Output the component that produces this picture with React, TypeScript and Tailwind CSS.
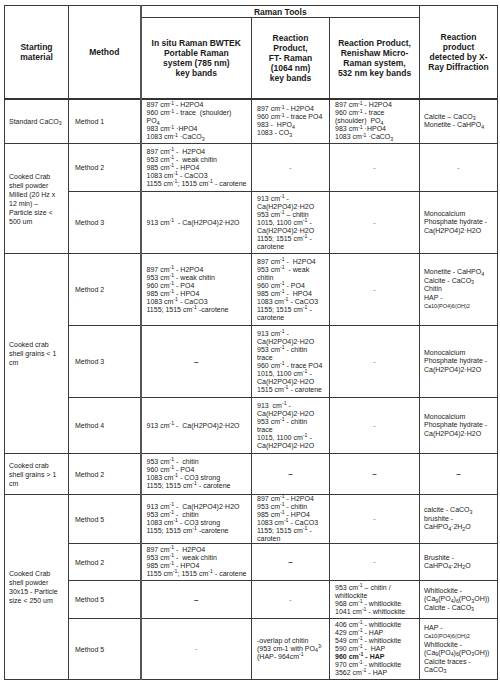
import React from "react";

const Cm = () => (
  <>
    cm<sup>-1</sup>
  </>
);

function Lines({ items, className = "" }: { items: React.ReactNode[]; className?: string }) {
  return (
    <div className={className}>
      {items.map((item, i) => (
        <div key={i} className="whitespace-nowrap">
          {item}
        </div>
      ))}
    </div>
  );
}

const th = "border border-[#3a3a3a] font-bold text-[8.5px] leading-[10px] text-center align-middle text-[#1a1a1a]";
const td = "border border-[#3a3a3a] align-middle px-[5px] py-0 text-[7px] leading-[8px] text-[#222]";
const tdSplit = `${td} border-l-2 border-l-[#555]`;
const first = "border border-[#3a3a3a] align-middle pl-[4px] pr-[2px] text-[7px] leading-[9px] text-[#222]";
const method = "border border-[#3a3a3a] align-middle pl-[6px] text-[7px] leading-[9px] text-[#222]";
const xrd = "border border-[#3a3a3a] align-middle pl-[4px] pr-[2px] text-[7px] leading-[8.5px] text-[#222]";

function Dash({ bold = false, split = false }: { bold?: boolean; split?: boolean }) {
  return (
    <td className={`${split ? tdSplit : td} text-center`}>
      {bold ? <span className="font-bold text-[8px]">–</span> : <span className="text-[#666]">-</span>}
    </td>
  );
}

const Ca = "Ca(H2PO4)2·H2O";
const Hap = <span className="text-[5.5px]">Ca10(PO4)6(OH)2</span>;
const Whit = (
  <>
    (Ca<sub>9</sub>(PO<sub>4</sub>)<sub>6</sub>(PO<sub>3</sub>OH))
  </>
);

export default function App() {
  return (
    <div className="w-[500px] h-[683px] bg-white pt-[5px] pl-[4px]" style={{ fontFamily: '"Liberation Sans", Arial, sans-serif' }}>
      <table className="table-fixed border-collapse w-[493px] border border-[#3a3a3a]">
        <colgroup>
          <col className="w-[64px]" />
          <col className="w-[72px]" />
          <col className="w-[111px]" />
          <col className="w-[78px]" />
          <col className="w-[90px]" />
          <col className="w-[78px]" />
        </colgroup>
        <thead>
          <tr className="h-[12px]">
            <th rowSpan={2} className={th}>
              Starting
              <br />
              material
            </th>
            <th rowSpan={2} className={th}>
              Method
            </th>
            <th colSpan={3} className={`${th} border-l-2 border-l-[#555]`}>
              Raman Tools
            </th>
            <th rowSpan={2} className={th}>
              Reaction
              <br />
              product
              <br />
              detected by X-
              <br />
              Ray Diffraction
            </th>
          </tr>
          <tr className="h-[81px] border-b-2 border-b-[#333]">
            <th className={`${th} border-l-2 border-l-[#555]`}>
              In situ Raman BWTEK
              <br />
              Portable Raman
              <br />
              system (785 nm)
              <br />
              key bands
            </th>
            <th className={th}>
              Reaction
              <br />
              Product,
              <br />
              FT- Raman
              <br />
              (1064 nm)
              <br />
              key bands
            </th>
            <th className={th}>
              Reaction Product,
              <br />
              Renishaw Micro-
              <br />
              Raman system,
              <br />
              532 nm key bands
            </th>
          </tr>
        </thead>
        <tbody>
          {/* Standard CaCO3 */}
          <tr className="h-[45px]">
            <td className={first}>
              Standard CaCO<sub>3</sub>
            </td>
            <td className={method}>Method 1</td>
            <td className={tdSplit}>
              <Lines
                items={[
                  <>897 <Cm /> - H2PO4</>,
                  <>960 <Cm /> - trace&nbsp;&nbsp;(shoulder)</>,
                  <>PO<sub>4</sub></>,
                  <>983 <Cm /> ·HPO4</>,
                  <>1083 <Cm /> ·CaCO<sub>3</sub></>,
                ]}
              />
            </td>
            <td className={td}>
              <Lines
                items={[
                  <>897 <Cm /> - H2PO4</>,
                  <>960 <Cm /> - trace PO4</>,
                  <>983 -&nbsp;&nbsp;HPO<sub>4</sub></>,
                  <>1083 - CO<sub>3</sub></>,
                ]}
              />
            </td>
            <td className={td}>
              <Lines
                items={[
                  <>897 <Cm /> - H2PO4</>,
                  <>960 <Cm /> - trace</>,
                  <>(shoulder)&nbsp;&nbsp;PO<sub>4</sub></>,
                  <>983 <Cm /> ·HPO4</>,
                  <>1083 <Cm /> ·CaCO<sub>3</sub></>,
                ]}
              />
            </td>
            <td className={xrd}>
              <Lines
                items={[
                  <>Calcite – CaCO<sub>3</sub></>,
                  <>Monetite - CaHPO<sub>4</sub></>,
                ]}
              />
            </td>
          </tr>

          {/* Cooked crab powder milled */}
          <tr className="h-[48px]">
            <td rowSpan={2} className={first}>
              <Lines items={["Cooked Crab", "shell powder", "Milled (20 Hz x", "12 min) –", "Particle size <", "500 um"]} />
            </td>
            <td className={method}>Method 2</td>
            <td className={tdSplit}>
              <Lines
                items={[
                  <>897 <Cm /> -&nbsp;&nbsp;H2PO4</>,
                  <>953 <Cm /> -&nbsp;&nbsp;weak chitin</>,
                  <>985 <Cm /> - HPO4</>,
                  <>1083 <Cm /> - CaCO3</>,
                  <>1155 <Cm />; 1515 <Cm /> - carotene</>,
                ]}
              />
            </td>
            <Dash />
            <Dash />
            <Dash />
          </tr>
          <tr className="h-[62px]">
            <td className={method}>Method 3</td>
            <td className={tdSplit}>
              913 <Cm />&nbsp;&nbsp;- {Ca}
            </td>
            <td className={td}>
              <Lines
                items={[
                  <>913 <Cm /> -</>,
                  Ca,
                  <>953 <Cm /> – chitin</>,
                  <>1015, 1100 <Cm /> -</>,
                  Ca,
                  <>1155; 1515 <Cm /> -</>,
                  "carotene",
                ]}
              />
            </td>
            <Dash />
            <td className={xrd}>
              <Lines items={["Monocalcium", "Phosphate hydrate -", Ca]} />
            </td>
          </tr>

          {/* Cooked crab grains < 1 cm */}
          <tr className="h-[72px]">
            <td rowSpan={3} className={first}>
              <Lines items={["Cooked crab", "shell grains  < 1", "cm"]} />
            </td>
            <td className={method}>Method 2</td>
            <td className={tdSplit}>
              <Lines
                items={[
                  <>897 <Cm /> - H2PO4</>,
                  <>953 <Cm /> - weak chitin</>,
                  <>960 <Cm /> - PO4</>,
                  <>985 <Cm /> - HPO4</>,
                  <>1083 <Cm /> - CaCO3</>,
                  <>1155; 1515 <Cm /> -carotene</>,
                ]}
              />
            </td>
            <td className={td}>
              <Lines
                items={[
                  <>897 <Cm /> -&nbsp;&nbsp;H2PO4</>,
                  <>953 <Cm />&nbsp;&nbsp;- weak</>,
                  "chitin",
                  <>960 <Cm /> - PO4</>,
                  <>985 <Cm /> -&nbsp;&nbsp;HPO4</>,
                  <>1083 <Cm /> - CaCO3</>,
                  <>1155; 1515 <Cm /> -</>,
                  "carotene",
                ]}
              />
            </td>
            <Dash />
            <td className={xrd}>
              <Lines
                items={[
                  <>Monetite - CaHPO<sub>4</sub></>,
                  <>Calcite - CaCO<sub>3</sub></>,
                  "Chitin",
                  "HAP -",
                  Hap,
                ]}
              />
            </td>
          </tr>
          <tr className="h-[72px]">
            <td className={method}>Method 3</td>
            <Dash bold split />
            <td className={td}>
              <Lines
                items={[
                  <>913 <Cm /> -</>,
                  Ca,
                  <>953 <Cm /> - chitin</>,
                  "trace",
                  <>960 <Cm /> - trace PO4</>,
                  <>1015, 1100 <Cm /> -</>,
                  Ca,
                  <>1515 <Cm /> - carotene</>,
                ]}
              />
            </td>
            <Dash />
            <td className={xrd}>
              <Lines items={["Monocalcium", "Phosphate hydrate -", Ca]} />
            </td>
          </tr>
          <tr className="h-[56px]">
            <td className={method}>Method 4</td>
            <td className={tdSplit}>
              913 <Cm /> -&nbsp;&nbsp;{Ca}
            </td>
            <td className={td}>
              <Lines
                items={[
                  <>913&nbsp;&nbsp;<Cm /> -</>,
                  Ca,
                  <>953 <Cm /> - chitin</>,
                  "trace",
                  <>1015, 1100 <Cm /> -</>,
                  Ca,
                ]}
              />
            </td>
            <Dash />
            <td className={xrd}>
              <Lines items={["Monocalcium", "Phosphate hydrate -", Ca]} />
            </td>
          </tr>

          {/* Cooked crab grains > 1 cm */}
          <tr className="h-[41px]">
            <td className={first}>
              <Lines items={["Cooked crab", "shell grains  > 1", "cm"]} />
            </td>
            <td className={method}>Method 2</td>
            <td className={tdSplit}>
              <Lines
                items={[
                  <>953 <Cm /> -&nbsp;&nbsp;chitin</>,
                  <>960 <Cm /> - PO4</>,
                  <>1083 <Cm /> - CO3 strong</>,
                  <>1155; 1515 <Cm /> - carotene</>,
                ]}
              />
            </td>
            <Dash bold />
            <Dash bold />
            <Dash bold />
          </tr>

          {/* Cooked crab powder 30x15 */}
          <tr className="h-[49px]">
            <td rowSpan={4} className={first}>
              <Lines items={["Cooked Crab", "shell powder", "30x15 - Particle", "size < 250 um"]} />
            </td>
            <td className={method}>Method 5</td>
            <td className={tdSplit}>
              <Lines
                items={[
                  <>913 <Cm /> -&nbsp;&nbsp;{Ca}</>,
                  <>953 <Cm /> -&nbsp;&nbsp;chitin</>,
                  <>1083 <Cm /> - CO3 strong</>,
                  <>1155; 1515 <Cm /> -carotene</>,
                ]}
              />
            </td>
            <td className={td}>
              <Lines
                items={[
                  <>897 <Cm /> - H2PO4</>,
                  <>953 <Cm /> - chitin</>,
                  <>985 <Cm /> - HPO4</>,
                  <>1083 <Cm /> - CaCO3</>,
                  <>1155; 1515 <Cm /> -</>,
                  "caroten",
                ]}
              />
            </td>
            <Dash />
            <td className={xrd}>
              <Lines
                items={[
                  <>calcite - CaCO<sub>3</sub></>,
                  "brushite -",
                  <>CaHPO<sub>4</sub>·2H<sub>2</sub>O</>,
                ]}
              />
            </td>
          </tr>
          <tr className="h-[37px]">
            <td className={method}>Method 2</td>
            <td className={tdSplit}>
              <Lines
                items={[
                  <>897 <Cm /> -&nbsp;&nbsp;H2PO4</>,
                  <>953 <Cm /> -&nbsp;&nbsp;weak chitin</>,
                  <>985 <Cm /> - HPO4</>,
                  <>1155 <Cm />; 1515 <Cm /> - carotene</>,
                ]}
              />
            </td>
            <Dash bold />
            <Dash />
            <td className={xrd}>
              <Lines items={["Brushite -", <>CaHPO<sub>4</sub>·2H<sub>2</sub>O</>]} />
            </td>
          </tr>
          <tr className="h-[38px]">
            <td className={method}>Method 5</td>
            <Dash bold split />
            <Dash />
            <td className={td}>
              <Lines
                items={[
                  <>953 <Cm /> – chitin /</>,
                  "whitlockite",
                  <>968 <Cm /> - whitlockite</>,
                  <>1041 <Cm /> - whitlockite</>,
                ]}
              />
            </td>
            <td className={xrd}>
              <Lines items={["Whitlockite -", Whit, <>Calcite - CaCO<sub>3</sub></>]} />
            </td>
          </tr>
          <tr className="h-[61px]">
            <td className={method}>Method 5</td>
            <Dash split />
            <td className={td}>
              <Lines
                items={[
                  "-overlap of chitin",
                  <>(953 cm-1 with PO<sub>4</sub><sup>3-</sup></>,
                  <>(HAP- 964cm<sup>-1</sup></>,
                ]}
              />
            </td>
            <td className={td}>
              <Lines
                items={[
                  <>406 <Cm /> - whitlockite</>,
                  <>429 <Cm /> - HAP</>,
                  <>549 <Cm /> - whitlockite</>,
                  <>590 <Cm /> -&nbsp;&nbsp;HAP</>,
                  <span className="font-bold">960 <Cm /> - HAP</span>,
                  <>970 <Cm /> - whitlockite</>,
                  <>3562 <Cm /> - HAP</>,
                ]}
              />
            </td>
            <td className={xrd}>
              <Lines
                items={["HAP -", Hap, "Whitlockite -", Whit, "Calcite traces -", <>CaCO<sub>3</sub></>]}
              />
            </td>
          </tr>
        </tbody>
      </table>
    </div>
  );
}
